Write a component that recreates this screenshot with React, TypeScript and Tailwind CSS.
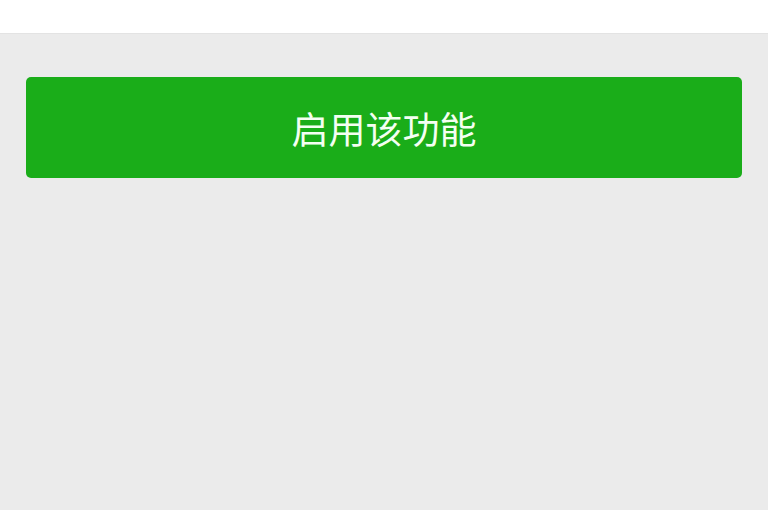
import React from "react";

export default function App() {
  return (
    <div className="w-[768px] h-[510px] bg-[#ebebeb] flex flex-col overflow-hidden" style={{ fontFamily: '"Noto Sans CJK SC", "Noto Sans", sans-serif' }}>
      <div className="h-[34px] bg-white border-b border-[#e3e3e3] shrink-0"></div>
      <div className="px-[26px] pt-[43px]">
        <button className="w-full h-[101px] rounded-[5px] bg-[#1aad19] text-[#f4fff2] text-[37px] leading-none flex items-center justify-center pt-[2px]">
          启用该功能
        </button>
      </div>
    </div>
  );
}
